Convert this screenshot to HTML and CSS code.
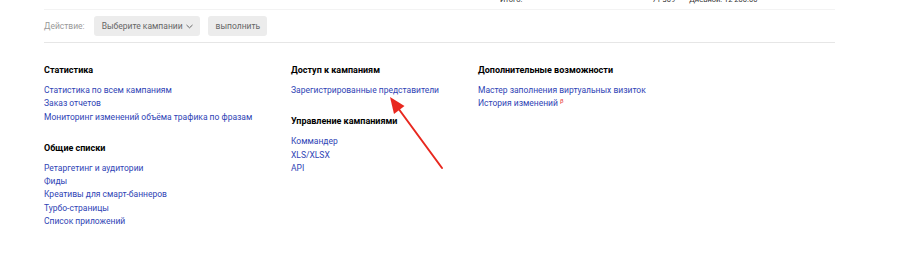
FILE: index.html
```html
<!DOCTYPE html>
<html lang="ru">
  <head>
    <meta charset="UTF-8" />
    <title>Директ — кампании</title>
    <link rel="stylesheet" href="styles.css">
  </head>
  <body>
    <div class="page">
      <div class="totals">
        <span class="totals-label">Итого:</span>
        <span class="totals-sum">71 309</span>
        <span class="totals-day">Дневной: 12 200.00</span>
      </div>

      <div class="actions">
        <span class="actions-label">Действие:</span>
        <button class="btn btn-select">Выберите кампании <svg width="7" height="5" viewBox="0 0 7 5"><path d="M0.5 1 L3.5 3.8 L6.5 1" fill="none" stroke="#666" stroke-width="1"/></svg></button>
        <button class="btn">выполнить</button>
      </div>

      <div class="footer-links">
        <div class="col col-1">
          <div class="group">
            <h3>Статистика</h3>
            <a href="#">Статистика по всем кампаниям</a>
            <a href="#">Заказ отчетов</a>
            <a href="#">Мониторинг изменений объёма трафика по фразам</a>
          </div>
          <div class="group">
            <h3>Общие списки</h3>
            <a href="#">Ретаргетинг и аудитории</a>
            <a href="#">Фиды</a>
            <a href="#">Креативы для смарт-баннеров</a>
            <a href="#">Турбо-страницы</a>
            <a href="#">Список приложений</a>
          </div>
        </div>
        <div class="col col-2">
          <div class="group">
            <h3>Доступ к кампаниям</h3>
            <a href="#">Зарегистрированные представители</a>
          </div>
          <div class="group">
            <h3>Управление кампаниями</h3>
            <a href="#">Коммандер</a>
            <a href="#">XLS/XLSX</a>
            <a href="#">API</a>
          </div>
        </div>
        <div class="col col-3">
          <div class="group">
            <h3>Дополнительные возможности</h3>
            <a href="#">Мастер заполнения виртуальных визиток</a>
            <a href="#">История изменений<sup class="beta">β</sup></a>
          </div>
        </div>
      </div>
    </div>

    <!-- annotation arrow drawn over the screenshot -->
    <svg class="arrow" width="900" height="262" viewBox="0 0 900 262">
      <line x1="442" y1="168" x2="398" y2="108" stroke="#e8281f" stroke-width="2" stroke-linecap="round"/>
      <polygon points="390,97 404.5,106 394,114" fill="#e8281f"/>
    </svg>
  </body>
</html>
```

FILE: styles.css
```css
body {
  margin: 0;
  font-family: Roboto, "Liberation Sans", sans-serif;
  font-size: 8.5px;
  color: #000;
  background: #fff;
  height: 262px;
  overflow: hidden;
}
.page {
  width: 791px;
  margin-left: 44px;
}
.totals {
  display: flex;
  margin-top: -7px;
  height: 16px;
  font-size: 7.5px;
  line-height: 13px;
  color: #333;
  border-bottom: 1px solid #f3f3f3;
}
.totals-label {
  margin-left: 456px;
}
.totals-sum {
  margin-left: 130px;
}
.totals-day {
  margin-left: 14px;
}
.actions {
  display: flex;
  align-items: center;
  height: 32px;
  border-bottom: 1px solid #e6e6e6;
}
.actions-label {
  color: #999;
  margin-right: 9px;
}
.btn {
  font-family: inherit;
  font-size: 8.5px;
  color: #666;
  background: #ececec;
  border: none;
  border-radius: 3px;
  height: 20px;
  padding: 0 7px 0 8px;
  margin-right: 8px;
  display: flex;
  align-items: center;
  gap: 3px;
}
.footer-links {
  display: flex;
  padding-top: 20px;
}
.col-1 {
  width: 247px;
}
.col-2 {
  width: 187px;
}
.group {
  display: flex;
  flex-direction: column;
  margin-bottom: 17px;
}
.group h3 {
  font-size: 9px;
  font-weight: bold;
  margin: 0 0 7px;
  line-height: 14px;
}
.group a {
  color: #2f44b5;
  text-decoration: none;
  line-height: 13.3px;
}
.beta {
  color: #e8281f;
  font-size: 6px;
  line-height: 0;
  vertical-align: 3px;
  margin-left: 2px;
}
.arrow {
  position: absolute;
  left: 0;
  top: 0;
  pointer-events: none;
}
```
